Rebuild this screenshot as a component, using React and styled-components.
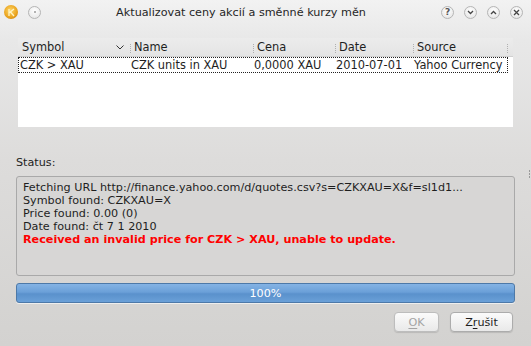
import React from "react";
import styled, { createGlobalStyle } from "styled-components";

const Global = createGlobalStyle`
  html, body { margin: 0; padding: 0; background: #d4d3d1; }
  body { font-family: "DejaVu Sans", "Noto Sans", sans-serif; font-size: 11px; color: #1e1e1e; }
`;

const Window = styled.div`
  position: relative;
  width: 531px;
  height: 346px;
  display: flex;
  flex-direction: column;
  background: linear-gradient(#f2f2f2 0px, #e8e8e8 40px, #dddcdb 160px, #d3d2d0 346px);
  overflow: hidden;
`;

const TitleBar = styled.div`
  height: 22px;
  display: flex;
  align-items: center;
  padding: 1px 8px 0 4px;
  gap: 10px;
`;

const Title = styled.div`
  flex: 1;
  text-align: center;
  font-size: 11.2px;
  color: #262626;
`;

const Buttons = styled.div`
  display: flex;
  gap: 10px;
  align-items: center;
`;

const Circle = styled.div`
  width: 13px;
  height: 13px;
  border-radius: 50%;
  box-sizing: border-box;
  border: 1px solid #b5b5b5;
  background: radial-gradient(circle at 50% 35%, #ffffff, #e2e2e2);
  display: flex;
  align-items: center;
  justify-content: center;
  color: #555;
`;

const AppIcon = styled.div`
  width: 14px;
  height: 14px;
  border-radius: 50%;
  background: radial-gradient(circle at 45% 40%, #ffd86a, #e9a21c 60%, #b86c08);
  display: flex;
  align-items: center;
  justify-content: center;
`;

const Content = styled.div`
  flex: 1;
  display: flex;
  flex-direction: column;
  padding: 15px 16px 0 16px;
`;

const Table = styled.div`
  margin: 0 2px;
  height: 89px;
  background: #ffffff;
  display: flex;
  flex-direction: column;
`;

const HeaderRow = styled.div`
  display: flex;
  height: 18px;
  background: linear-gradient(#ececec, #e4e4e4);
  border-bottom: 1px solid #d0d0d0;
  align-items: center;
`;

const HeadCell = styled.div`
  position: relative;
  width: ${(p) => p.w}px;
  box-sizing: border-box;
  padding-left: ${(p) => p.pad ?? 3}px;
  font-size: 11.4px;
  color: #1e1e1e;
  display: flex;
  align-items: center;
  &::after {
    content: "";
    display: ${(p) => (p.nosep ? "none" : "block")};
    position: absolute;
    right: 0;
    top: 4px;
    height: 9px;
    border-right: 1px dotted #b0b0b0;
  }
`;

const Arrow = styled.span`
  margin-left: auto;
  margin-right: 7px;
  display: flex;
`;

const DataRow = styled.div`
  display: flex;
  height: 16px;
  align-items: center;
  width: 490px;
  box-sizing: border-box;
  border: 1px dotted #222;
`;

const Cell = styled.div`
  width: ${(p) => p.w}px;
  box-sizing: border-box;
  padding-left: 1px;
  font-size: 11.4px;
  white-space: nowrap;
`;

const Label = styled.div`
  margin-top: 29px;
  height: 20px;
  font-size: 11.2px;
  color: #1e1e1e;
`;

const StatusBox = styled.div`
  height: 100px;
  box-sizing: border-box;
  border: 1px solid #a9a9a9;
  border-radius: 3px;
  background: #d7d6d5;
  padding: 4px 6px;
  line-height: 13px;
  font-size: 11.2px;
`;

const Line = styled.div`
  white-space: nowrap;
  color: ${(p) => (p.error ? "#ff0000" : "#1e1e1e")};
  font-weight: ${(p) => (p.error ? "bold" : "normal")};
`;

const Progress = styled.div`
  margin-top: 7px;
  height: 20px;
  box-sizing: border-box;
  border: 1px solid #4d79a8;
  border-radius: 3px;
  background: linear-gradient(#84b3e4 0%, #6ba0d8 45%, #5a91cc 55%, #6aa0d8 100%);
  color: #ffffff;
  display: flex;
  align-items: center;
  justify-content: center;
  font-size: 11.2px;
  box-shadow: 0 1px 0 rgba(255, 255, 255, 0.6);
`;

const ButtonRow = styled.div`
  margin-top: 9px;
  display: flex;
  justify-content: flex-end;
  gap: 11px;
  padding-right: 2px;
`;

const Button = styled.div`
  width: ${(p) => p.w}px;
  height: 20px;
  box-sizing: border-box;
  border: 1px solid ${(p) => (p.disabled ? "#bdbdbd" : "#acacac")};
  border-radius: 4px;
  background: linear-gradient(#fbfbfb, #e9e9e9);
  box-shadow: 0 1px 1px rgba(0, 0, 0, 0.12);
  display: flex;
  align-items: center;
  justify-content: center;
  font-size: 11.2px;
  color: ${(p) => (p.disabled ? "#a4a4a4" : "#1e1e1e")};
  u { text-decoration-thickness: 1px; text-underline-offset: 2px; }
`;

const Grip = styled.div`
  position: absolute;
  right: 1px;
  top: ${(p) => p.top}px;
  display: flex;
  flex-direction: column;
  gap: 1px;
  span { width: 1px; height: 2px; background: #9a9a9a; display: block; }
`;

const columns = [
  { key: "symbol", title: "Symbol", w: 113, pad: 4 },
  { key: "name", title: "Name", w: 123 },
  { key: "price", title: "Cena", w: 82 },
  { key: "date", title: "Date", w: 78 },
  { key: "source", title: "Source", w: 94 },
];

const row = {
  symbol: "CZK > XAU",
  name: "CZK units in XAU",
  price: "0,0000 XAU",
  date: "2010-07-01",
  source: "Yahoo Currency",
};

const lines = [
  "Fetching URL http://finance.yahoo.com/d/quotes.csv?s=CZKXAU=X&f=sl1d1...",
  "Symbol found: CZKXAU=X",
  "Price found: 0.00 (0)",
  "Date found: čt 7 1 2010",
];

export default function App() {
  return (
    <>
      <Global />
      <Window>
        <TitleBar>
          <AppIcon>
            <svg width="9" height="9" viewBox="0 0 9 9">
              <path d="M2 1 L2 8 M2 5 L7 1 M3.5 4 L7 8" stroke="#fff3c4" strokeWidth="1.3" fill="none" />
            </svg>
          </AppIcon>
          <Circle>
            <span style={{ width: 2, height: 2, borderRadius: 1, background: "#9a9a9a" }} />
          </Circle>
          <Title>Aktualizovat ceny akcií a směnné kurzy měn</Title>
          <Buttons>
            <Circle style={{ fontSize: 9, fontWeight: "bold" }}>?</Circle>
            <Circle>
              <svg width="7" height="5" viewBox="0 0 7 5">
                <path d="M1 1 L3.5 3.5 L6 1" stroke="#444" strokeWidth="1.3" fill="none" />
              </svg>
            </Circle>
            <Circle>
              <svg width="7" height="5" viewBox="0 0 7 5">
                <path d="M1 4 L3.5 1.5 L6 4" stroke="#444" strokeWidth="1.3" fill="none" />
              </svg>
            </Circle>
            <Circle>
              <svg width="7" height="7" viewBox="0 0 7 7">
                <path d="M1 1 L6 6 M6 1 L1 6" stroke="#444" strokeWidth="1.3" fill="none" />
              </svg>
            </Circle>
          </Buttons>
        </TitleBar>
        <Content>
          <Table>
            <HeaderRow>
              {columns.map((c, i) => (
                <HeadCell key={c.key} w={c.w} pad={c.pad}>
                  {c.title}
                  {i === 0 && (
                    <Arrow>
                      <svg width="8" height="5" viewBox="0 0 8 5">
                        <path d="M0.5 0.5 L4 4 L7.5 0.5" stroke="#333" strokeWidth="1" fill="none" />
                      </svg>
                    </Arrow>
                  )}
                </HeadCell>
              ))}
            </HeaderRow>
            <DataRow>
              {columns.map((c) => (
                <Cell key={c.key} w={c.key === "symbol" ? 111 : c.w}>
                  {row[c.key]}
                </Cell>
              ))}
            </DataRow>
          </Table>
          <Label>Status:</Label>
          <StatusBox>
            {lines.map((l) => (
              <Line key={l}>{l}</Line>
            ))}
            <Line error>Received an invalid price for CZK &gt; XAU, unable to update.</Line>
          </StatusBox>
          <Progress>100%</Progress>
          <ButtonRow>
            <Button w={45} disabled>
              <span><u>O</u>K</span>
            </Button>
            <Button w={63}>
              <span>Z<u>r</u>ušit</span>
            </Button>
          </ButtonRow>
        </Content>
        <Grip top={170}>
          <span />
          <span />
          <span />
        </Grip>
      </Window>
    </>
  );
}
